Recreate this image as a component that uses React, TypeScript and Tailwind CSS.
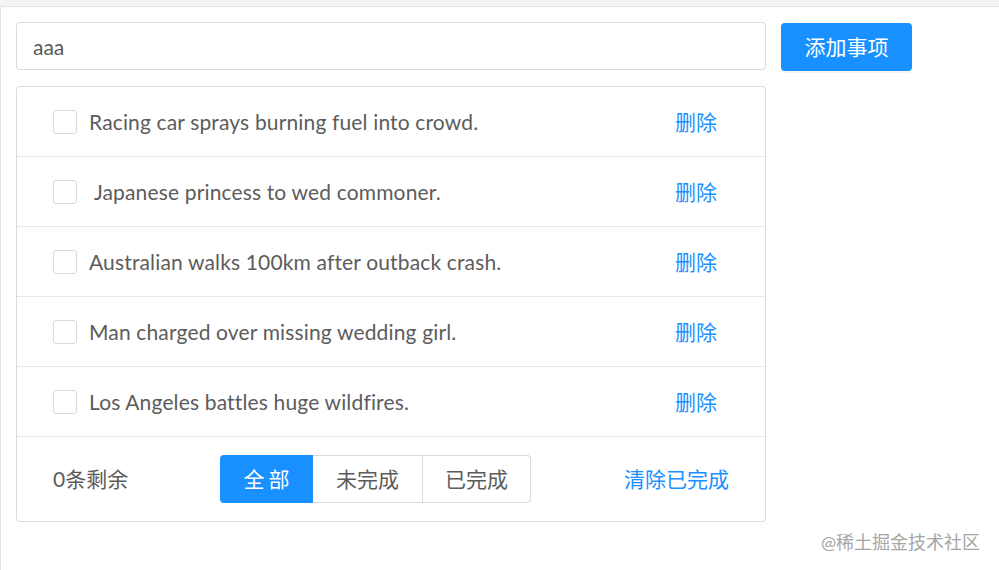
import React from 'react'

const todos = [
  'Racing car sprays burning fuel into crowd.',
  '\u00a0Japanese princess to wed commoner.',
  'Australian walks 100km after outback crash.',
  'Man charged over missing wedding girl.',
  'Los Angeles battles huge wildfires.',
]

const font = { fontFamily: 'Lato, "Noto Sans CJK SC", sans-serif' }

const App = () => {
  return (
    <div className="relative w-[999px] h-[570px] bg-[#f4f4f4] pt-[6px] overflow-hidden" style={font}>
      <div className="h-full bg-white border-t border-l border-[#e3e3e3] pl-[15px] pt-[15px]">
        <div className="flex flex-row items-start gap-[15px] h-12">
          <input
            className="w-[750px] h-12 border border-[#d9d9d9] rounded-[4px] px-4 text-[21px] text-[#595959] outline-none"
            defaultValue="aaa"
          />
          <button className="w-[131px] h-12 mt-px bg-[#1890ff] text-white text-[21px] rounded-[4px] shadow-[0_2px_0_rgba(0,0,0,0.04)]">
            添加事项
          </button>
        </div>

        <div className="w-[750px] mt-4 border border-[#d9d9d9] rounded-[4px]">
          <ul className="flex flex-col">
            {todos.map((t) => (
              <li key={t} className="flex flex-row items-center h-[70px] border-b border-[#e8e8e8] pl-9 pr-12">
                <span className="w-6 h-6 border border-[#d9d9d9] rounded-[3px] bg-white" />
                <p className="ml-3 text-[21px] tracking-[0.15px] text-[#5c5c5c] whitespace-pre">{t}</p>
                <a className="ml-auto text-[21px] text-[#1890ff] cursor-pointer">删除</a>
              </li>
            ))}
          </ul>
          <div className="flex flex-row items-center h-[84px] pl-9 pr-9">
            <p className="w-[167px] text-[21px] text-[#5c5c5c]">0条剩余</p>
            <div className="flex flex-row h-12 text-[21px]">
              <button className="w-[93px] bg-[#1890ff] text-white rounded-l-[4px] tracking-[0.2em] pl-[0.2em]">全部</button>
              <button className="w-[110px] border-y border-r border-[#d9d9d9] text-[#5c5c5c]">未完成</button>
              <button className="w-[108px] border-y border-r border-[#d9d9d9] text-[#5c5c5c] rounded-r-[4px]">已完成</button>
            </div>
            <a className="ml-auto text-[21px] text-[#1890ff] cursor-pointer">清除已完成</a>
          </div>
        </div>
      </div>
      <span className="absolute right-[19px] bottom-[14px] text-[18px] text-[#a6a6a6]">@稀土掘金技术社区</span>
    </div>
  )
}

export default App
